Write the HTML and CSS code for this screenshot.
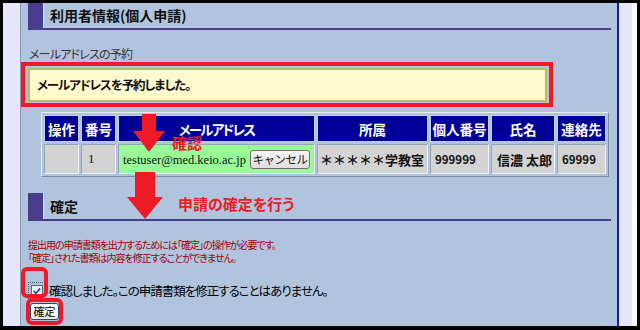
FILE: index.html
```html
<!DOCTYPE html>
<html lang="ja">
<head>
    <meta charset="UTF-8">
    <meta name="viewport" content="width=device-width, initial-scale=1.0">
    <title>利用者情報(個人申請)</title>
    <link rel="stylesheet" href="styles.css">
</head>
<body>
    <div class="screen">
        <div class="side-left"></div>
        <div class="main">
            <h2 class="sec-title"><span>利用者情報(個人申請)</span></h2>
            <p class="label">メールアドレスの予約</p>
            <div class="notice">メールアドレスを予約しました。</div>

            <table class="user-table">
                <colgroup>
                    <col class="c-op"><col class="c-no"><col class="c-mail"><col class="c-dept">
                    <col class="c-id"><col class="c-name"><col class="c-tel">
                </colgroup>
                <tr>
                    <th>操作</th><th>番号</th><th class="th-kana">メールアドレス</th><th>所属</th>
                    <th>個人番号</th><th>氏名</th><th>連絡先</th>
                </tr>
                <tr>
                    <td class="gray"></td>
                    <td class="gray num">1</td>
                    <td class="mail">testuser@med.keio.ac.jp <button class="cancel-btn">キャンセル</button></td>
                    <td class="gray dept">＊＊＊＊＊学教室</td>
                    <td class="gray digits">999999</td>
                    <td class="gray">信濃 太郎</td>
                    <td class="gray digits">69999</td>
                </tr>
            </table>

            <h2 class="sec-title confirm-title"><span>確定</span></h2>
            <p class="note">提出用の申請書類を出力するためには「確定」の操作が必要です。<br>「確定」された書類は内容を修正することができません。</p>
            <label class="agree">
                <span class="check-focus">
                    <svg width="12" height="12" viewBox="0 0 12 12">
                        <rect x="0.5" y="0.5" width="11" height="11" fill="#f2f2ee" stroke="#4a6690"/>
                        <path d="M2.8 6 L4.9 8.3 L9.2 3.4" fill="none" stroke="#2d3f8f" stroke-width="1.6"/>
                    </svg>
                </span>
                確認しました。この申請書類を修正することはありません。
            </label>
            <button class="confirm-btn">確定</button>

            <!-- annotations -->
            <div class="mark mark-notice"></div>
            <div class="mark mark-check"></div>
            <div class="mark mark-btn"></div>
            <svg class="arrow arrow-1" width="32" height="38" viewBox="0 0 32 38">
                <polygon points="9,0 23,0 23,17 32,17 16,38 0,17 9,17" fill="#ed1c24"/>
            </svg>
            <svg class="arrow arrow-2" width="36" height="47" viewBox="0 0 36 47">
                <polygon points="8,0 28,0 28,25 36,25 18,47 0,25 8,25" fill="#ed1c24"/>
            </svg>
            <div class="tag tag-1">確認</div>
            <div class="tag tag-2">申請の確定を行う</div>
        </div>
        <div class="side-right"></div>
    </div>
</body>
</html>
```

FILE: styles.css
```css
* {
    box-sizing: border-box;
}

body {
    margin: 0;
    background-color: #000;
    font-family: "Noto Sans CJK JP", sans-serif;
    font-feature-settings: "palt";
    color: #111;
}

.screen {
    display: flex;
    width: 634px;
    height: 323px;
    margin: 3px 3px 0 3px;
    background-color: #fff;
    overflow: hidden;
}

.side-left {
    width: 17px;
    background-color: #e6e6fa;
}

.side-right {
    width: 13px;
    background-color: #e6e6fa;
}

.main {
    position: relative;
    width: 599px;
    background-color: #b0c4de;
    border-left: 1px solid #8a9ab4;
    border-right: 2px solid #1a1aa8;
    overflow: hidden;
}

.sec-title {
    margin: 0 6px 0 7px;
    height: 27px;
    border-left: 15px solid #483d8b;
    border-bottom: 2px solid #483d8b;
    font-size: 14px;
    font-weight: bold;
    line-height: 25px;
}

.sec-title span {
    display: block;
    height: 100%;
    padding-left: 6px;
    border-left: 1px solid #cfdaea;
}

.confirm-title {
    margin-top: 16px;
    height: 28px;
    line-height: 26px;
}

.label {
    margin: 16px 0 0 8px;
    font-size: 12px;
    line-height: 16px;
    letter-spacing: -0.8px;
    color: #333;
}

.notice {
    margin: 6px 0 0 7px;
    width: 519px;
    height: 34px;
    padding-left: 7px;
    border: 2px solid #bdb76b;
    background-color: #fffacd;
    font-size: 12.5px;
    font-weight: bold;
    line-height: 30px;
    letter-spacing: -1.1px;
}

.user-table {
    margin: 10px 0 0 20px;
    width: 568px;
    table-layout: fixed;
    border-collapse: separate;
    border-spacing: 2px;
    border: 1px solid;
    border-color: #e6ecf5 #7d8ca5 #7d8ca5 #e6ecf5;
}

.c-op { width: 35px; }
.c-no { width: 35px; }
.c-mail { width: 197px; }
.c-dept { width: 111px; }
.c-id { width: 59px; }
.c-name { width: 64px; }
.c-tel { width: 49px; }

.user-table th {
    height: 27px;
    padding: 0;
    background-color: #000099;
    color: #fff;
    font-size: 13.5px;
    font-weight: bold;
    border: 1px solid #c5cde0;
    white-space: nowrap;
}

.user-table th.th-kana {
    letter-spacing: -1.8px;
}

.user-table td {
    height: 30px;
    padding: 0 5px;
    border: 1px solid;
    border-color: #98a4ba #eef1f6 #eef1f6 #98a4ba;
    font-size: 13px;
    font-weight: bold;
    white-space: nowrap;
}

.user-table td.gray {
    background-color: #d3d3d3;
}

.user-table td.num {
    padding-left: 6px;
    font-family: "Liberation Serif", serif;
    font-weight: normal;
    font-size: 13px;
}

.user-table td.dept {
    padding: 0 2px;
    font-feature-settings: normal;
}

.user-table td.digits {
    font-size: 11.5px;
    padding-left: 4px;
}

.user-table td.mail {
    padding: 0 4px;
    background-color: #98fb98;
    font-family: "Liberation Serif", serif;
    font-weight: normal;
    font-size: 12.5px;
}

.cancel-btn {
    width: 60px;
    height: 19px;
    margin-left: 1px;
    padding: 0;
    border: 1px solid #707070;
    border-radius: 3px;
    background: linear-gradient(#f6f6f6, #dedede);
    font-family: "Noto Sans CJK JP", sans-serif;
    font-size: 11.5px;
    line-height: 17px;
    letter-spacing: -0.5px;
    color: #111;
}

.note {
    margin: 17px 0 0 7px;
    font-size: 10px;
    line-height: 13px;
    letter-spacing: -1px;
    color: #a00000;
}

.agree {
    display: flex;
    align-items: center;
    margin: 18px 0 0 7px;
    height: 17px;
    font-size: 12.5px;
    line-height: 17px;
    letter-spacing: -1px;
    color: #000;
}

.check-focus {
    display: flex;
    align-items: center;
    justify-content: center;
    width: 17px;
    height: 17px;
    margin-right: 4px;
    border: 1px dotted #555;
}

.confirm-btn {
    display: block;
    margin: 4px 0 0 9px;
    width: 29px;
    height: 17px;
    padding: 0;
    border: 1px solid #27477a;
    border-radius: 3px;
    background: linear-gradient(#ffffff, #ecebe4);
    font-family: "Noto Sans CJK JP", sans-serif;
    font-size: 11px;
    line-height: 15px;
    color: #000;
}

.mark {
    position: absolute;
    border: 4px solid #ed1c24;
}

.mark-notice {
    left: 0;
    top: 59px;
    width: 532px;
    height: 45px;
}

.mark-check {
    left: 0;
    top: 264px;
    width: 27px;
    height: 31px;
    border-radius: 6px;
}

.mark-btn {
    left: 5px;
    top: 295px;
    width: 37px;
    height: 27px;
    border-radius: 6px;
}

.arrow {
    position: absolute;
}

.arrow-1 {
    left: 112px;
    top: 111px;
}

.arrow-2 {
    left: 106px;
    top: 169px;
}

.tag {
    position: absolute;
    color: #ed1c24;
    font-size: 15px;
    font-weight: bold;
    line-height: 16px;
    white-space: nowrap;
}

.tag-1 {
    left: 151px;
    top: 132px;
}

.tag-2 {
    left: 157px;
    top: 193px;
}
```
